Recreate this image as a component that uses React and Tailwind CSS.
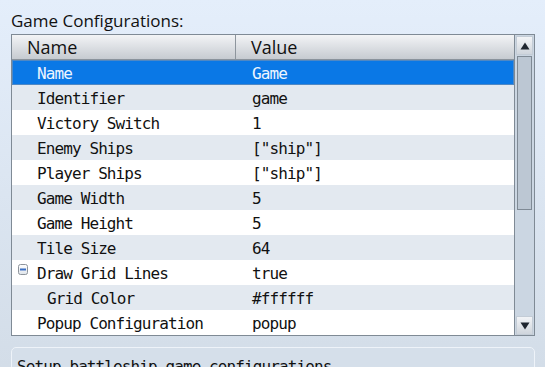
import React from "react";

const rows = [
  { name: "Name", value: "Game" },
  { name: "Identifier", value: "game" },
  { name: "Victory Switch", value: "1" },
  { name: "Enemy Ships", value: '["ship"]' },
  { name: "Player Ships", value: '["ship"]' },
  { name: "Game Width", value: "5" },
  { name: "Game Height", value: "5" },
  { name: "Tile Size", value: "64" },
  { name: "Draw Grid Lines", value: "true", toggle: true },
  { name: "Grid Color", value: "#ffffff", child: true },
  { name: "Popup Configuration", value: "popup" },
];

const mono = "font-['DejaVu_Sans_Mono',monospace] text-[16px] tracking-[-0.9px]";

function CollapseIcon() {
  return (
    <svg width="10" height="11" viewBox="0 0 10 11" className="absolute left-[6px] top-[4px]">
      <defs>
        <linearGradient id="cg" x1="0" y1="0" x2="0" y2="1">
          <stop offset="0" stopColor="#ffffff" />
          <stop offset="1" stopColor="#dfe4ea" />
        </linearGradient>
      </defs>
      <rect x="0.5" y="0.5" width="9" height="10" rx="2" fill="url(#cg)" stroke="#8d939b" />
      <rect x="2" y="4.5" width="6" height="2" fill="#3a6fc4" />
    </svg>
  );
}

function Row({ r, i }) {
  const selected = i === 0;
  const bg = selected
    ? "bg-[#0a78e6] border border-[#4f88c4] text-[#eef5ff]"
    : i % 2 === 1
    ? "bg-[#e3e9f0] text-[#111]"
    : "bg-white text-[#111]";
  return (
    <div className={`relative flex h-[25px] items-center pt-[2px] ${bg} ${mono}`}>
      {r.toggle && <CollapseIcon />}
      <div className={`w-[225px] shrink-0 ${r.child ? "pl-[35px]" : "pl-[25px]"} ${selected ? "-ml-px" : ""}`}>
        {r.name}
      </div>
      <div className="pl-[15px]">{r.value}</div>
    </div>
  );
}

function ScrollButton({ up }) {
  return (
    <div className="h-[19px] mx-[1px] mt-[1px] flex items-center justify-center border border-[#c3ccd6] bg-gradient-to-b from-[#f2f4f7] to-[#cfd5dc]">
      <svg width="10" height="8" viewBox="0 0 10 8">
        {up ? (
          <polygon points="5,0.5 9.5,7.5 0.5,7.5" fill="#1f2630" />
        ) : (
          <polygon points="0.5,0.5 9.5,0.5 5,7.5" fill="#1f2630" />
        )}
      </svg>
    </div>
  );
}

export default function App() {
  return (
    <div className="w-[545px] h-[367px] overflow-hidden bg-gradient-to-b from-[#e4eefb] to-[#d3dde8] font-['Open_Sans',sans-serif]">
      <div className="pl-[11px] pt-[10px] h-[34px] text-[17px] leading-[22px] text-[#111]">Game Configurations:</div>
      <div className="ml-[11px] w-[524px] h-[302px] border border-[#7f8a95] flex">
        <div className="w-[502px] flex flex-col">
          <div className="h-[25px] flex border-b border-[#8a939c] bg-gradient-to-b from-[#f3f4f6] to-[#c6cbd1] text-[18px] font-medium text-[#111]">
            <div className="w-[224px] border-r border-[#8d959d] pl-[15px] leading-[24px]">Name</div>
            <div className="pl-[15px] leading-[24px]">Value</div>
          </div>
          {rows.map((r, i) => (
            <Row key={i} r={r} i={i} />
          ))}
        </div>
        <div className="flex-1 border-l border-[#7f8a95] bg-[#cbd6e2] flex flex-col">
          <ScrollButton up />
          <div className="mx-[2px] mt-[1px] h-[154px] border border-[#7f8a95] bg-[#bcc7d3]" />
          <div className="flex-1" />
          <ScrollButton />
        </div>
      </div>
      <div className="mt-[11px] ml-[11px] w-[524px] h-[40px] rounded-[5px] border border-[#eef3f9] bg-[#d5dfea] pl-[5px] pt-[7px]">
        <div className={`${mono} text-[#111]`}>Setup battleship game configurations.</div>
      </div>
    </div>
  );
}
